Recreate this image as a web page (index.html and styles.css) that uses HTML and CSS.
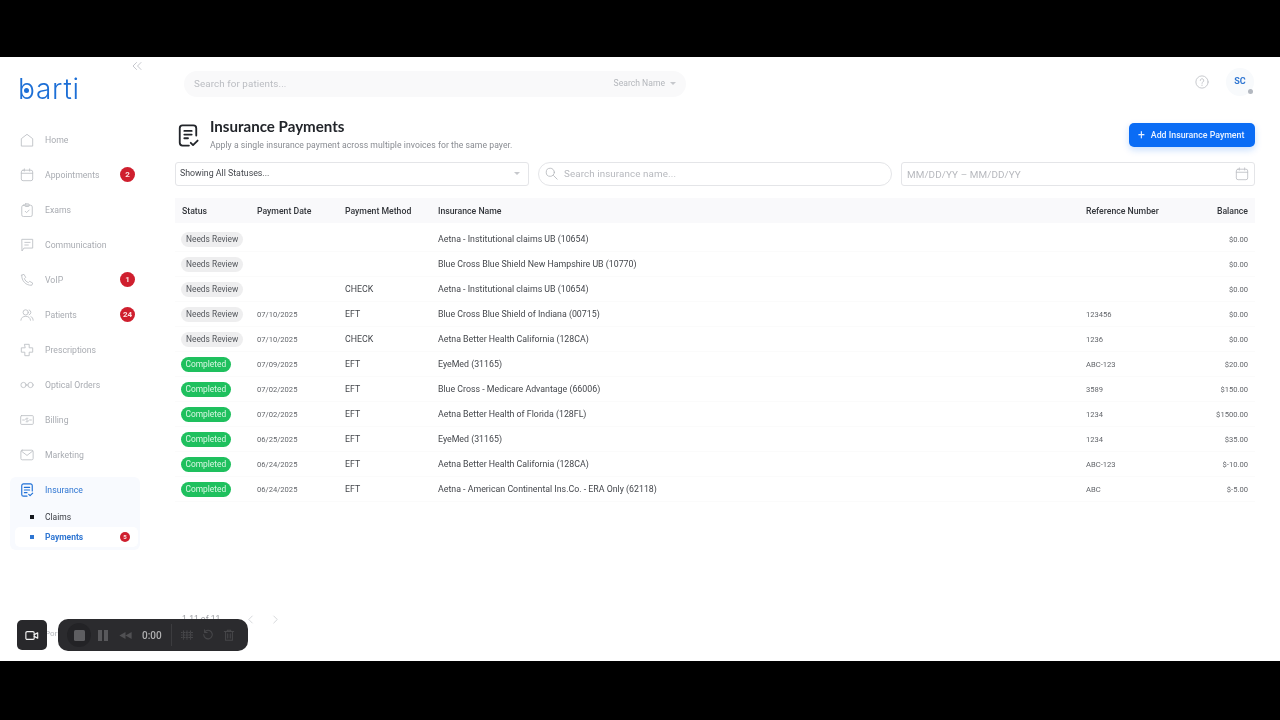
FILE: index.html
```html
<!DOCTYPE html>
<html lang="en">
<head>
<meta charset="utf-8">
<title>Insurance Payments</title>
<link rel="stylesheet" href="styles.css">
</head>
<body>
<div class="screen">
  <aside class="sidebar">
    <div class="collapse"><svg class="collapse-icon" viewBox="0 0 10 8"><path d="M4.500 .5 1 4l3.500 3.500M9 .5 5.500 4 9 7.500"/></svg></div>
    <div class="logo"><span class="logo-text">barti</span><span class="logo-dot"></span></div>
    <nav class="nav">
      <a class="nav-item"><svg class="ico" viewBox="0 0 16 16"><path d="M1.500 14.500V6.500L8 1.500l6.500 5v8z"/></svg><span>Home</span></a>
      <a class="nav-item"><svg class="ico" viewBox="0 0 16 16"><rect x="1.500" y="2.500" width="13" height="12" rx="2"/><path d="M1.500 6h13M5 1v2.500M11 1v2.500"/></svg><span>Appointments</span><b class="badge">2</b></a>
      <a class="nav-item"><svg class="ico" viewBox="0 0 16 16"><rect x="2" y="2.500" width="12" height="13" rx="2"/><rect x="5.500" y="1" width="5" height="3" rx="1"/><path d="m6 9.500 1.500 1.500 3-3"/></svg><span>Exams</span></a>
      <a class="nav-item"><svg class="ico" viewBox="0 0 16 16"><path d="M2.500 1.500h12v10H4.500l-2 3z"/><path d="M5.500 5h6M5.500 8h4"/></svg><span>Communication</span></a>
      <a class="nav-item"><svg class="ico" viewBox="0 0 16 16"><path d="M2 2.500 4.500 1.500l2 3.500-1.500 1.500c.8 2 2.500 3.700 4.500 4.500L11 9.500l3.500 2-1 2.500C7 14.500 1.500 9 2 2.500z"/></svg><span>VoIP</span><b class="badge">1</b></a>
      <a class="nav-item"><svg class="ico" viewBox="0 0 16 16"><circle cx="6.500" cy="5" r="3"/><path d="M1 14c.2-3 2.500-4.500 5.500-4.500S11.800 11 12 14M10.500 2.200a3 3 0 0 1 0 5.600M12.500 9.800c1.500.6 2.400 2 2.500 4.200"/></svg><span>Patients</span><b class="badge">24</b></a>
      <a class="nav-item"><svg class="ico" viewBox="0 0 16 16"><path d="M5.500 1.500h5v4h4v5h-4v4h-5v-4h-4v-5h4z"/></svg><span>Prescriptions</span></a>
      <a class="nav-item"><svg class="ico" viewBox="0 0 16 16"><circle cx="4" cy="8" r="3"/><circle cx="12" cy="8" r="3"/><path d="M7 8h2"/></svg><span>Optical Orders</span></a>
      <a class="nav-item"><svg class="ico" viewBox="0 0 16 16"><rect x=".8" y="3" width="14.400" height="10" rx="1"/><path d="M3 8h2M11 8h2M9 6H7.500a1 1 0 0 0 0 2h1a1 1 0 0 1 0 2H7"/></svg><span>Billing</span></a>
      <a class="nav-item"><svg class="ico" viewBox="0 0 16 16"><rect x="1" y="2.500" width="14" height="11" rx="1.500"/><path d="m1.500 3.500 6.500 5 6.500-5"/></svg><span>Marketing</span></a>
      <div class="nav-group">
        <a class="nav-head"><svg class="ico ico-active" viewBox="0 0 16 16"><path d="M14 9V3a2 2 0 0 0-2-2H4a2 2 0 0 0-2 2v10a2 2 0 0 0 2 2h4"/><path d="M5 5h6M5 8h6M5 11h3M10 13l1.500 1.500 3-3"/></svg><span>Insurance</span></a>
        <a class="sub-item"><i class="bullet"></i><span>Claims</span></a>
        <a class="sub-item sub-active"><i class="bullet"></i><span>Payments</span><b class="badge badge-sm">5</b></a>
      </div>
    </nav>
    <div class="side-foot">Portal</div>
  </aside>

  <main class="main">
    <header class="topbar">
      <div class="patient-search">
        <span class="patient-ph">Search for patients...</span>
        <span class="patient-mode">Search Name<i class="caret"></i></span>
      </div>
      <div class="top-right">
        <svg class="help" viewBox="0 0 16 16"><circle cx="8" cy="8" r="7"/><path d="M6 6.300a2 2 0 1 1 3 1.700c-.7.400-1 .8-1 1.600M8 11.500v.6"/></svg>
        <div class="avatar">SC<i class="status-dot"></i></div>
      </div>
    </header>

    <section class="page-head">
      <svg class="page-icon" viewBox="0 0 24 26"><path d="M21 13V5a3 3 0 0 0-3-3H6a3 3 0 0 0-3 3v16a3 3 0 0 0 3 3h7"/><path d="M8 8h8M8 12h8M8 16h4M15 21l2.500 2.500 5-5"/></svg>
      <div class="page-titles">
        <h1>Insurance Payments</h1>
        <p>Apply a single insurance payment across multiple invoices for the same payer.</p>
      </div>
      <button class="add-btn"><span class="plus">+</span>Add Insurance Payment</button>
    </section>

    <section class="filters">
      <div class="field field-select"><span>Showing All Statuses...</span><i class="caret"></i></div>
      <div class="field field-search"><svg class="search-ico" viewBox="0 0 16 16"><circle cx="6.500" cy="6.500" r="5"/><path d="m10.500 10.500 4.500 4.500"/></svg><span>Search insurance name...</span></div>
      <div class="field field-date"><span>MM/DD/YY – MM/DD/YY</span><svg class="cal-ico" viewBox="0 0 16 16"><rect x="1.500" y="2.500" width="13" height="12" rx="2"/><path d="M1.500 6h13M5 1v2.500M11 1v2.500"/></svg></div>
    </section>

    <table class="grid">
      <colgroup><col class="c1"><col class="c2"><col class="c3"><col class="c4"><col class="c5"><col class="c6"></colgroup>
      <thead>
        <tr><th>Status</th><th>Payment Date</th><th>Payment Method</th><th>Insurance Name</th><th>Reference Number</th><th class="num">Balance</th></tr>
      </thead>
      <tbody>
        <tr><td><span class="pill pill-review">Needs Review</span></td><td class="sm"></td><td></td><td>Aetna - Institutional claims UB (10654)</td><td class="sm"></td><td class="sm num">$0.00</td></tr>
        <tr><td><span class="pill pill-review">Needs Review</span></td><td class="sm"></td><td></td><td>Blue Cross Blue Shield New Hampshire UB (10770)</td><td class="sm"></td><td class="sm num">$0.00</td></tr>
        <tr><td><span class="pill pill-review">Needs Review</span></td><td class="sm"></td><td>CHECK</td><td>Aetna - Institutional claims UB (10654)</td><td class="sm"></td><td class="sm num">$0.00</td></tr>
        <tr><td><span class="pill pill-review">Needs Review</span></td><td class="sm">07/10/2025</td><td>EFT</td><td>Blue Cross Blue Shield of Indiana (00715)</td><td class="sm">123456</td><td class="sm num">$0.00</td></tr>
        <tr><td><span class="pill pill-review">Needs Review</span></td><td class="sm">07/10/2025</td><td>CHECK</td><td>Aetna Better Health California (128CA)</td><td class="sm">1236</td><td class="sm num">$0.00</td></tr>
        <tr><td><span class="pill pill-done">Completed</span></td><td class="sm">07/09/2025</td><td>EFT</td><td>EyeMed (31165)</td><td class="sm">ABC-123</td><td class="sm num">$20.00</td></tr>
        <tr><td><span class="pill pill-done">Completed</span></td><td class="sm">07/02/2025</td><td>EFT</td><td>Blue Cross - Medicare Advantage (66006)</td><td class="sm">3589</td><td class="sm num">$150.00</td></tr>
        <tr><td><span class="pill pill-done">Completed</span></td><td class="sm">07/02/2025</td><td>EFT</td><td>Aetna Better Health of Florida (128FL)</td><td class="sm">1234</td><td class="sm num">$1500.00</td></tr>
        <tr><td><span class="pill pill-done">Completed</span></td><td class="sm">06/25/2025</td><td>EFT</td><td>EyeMed (31165)</td><td class="sm">1234</td><td class="sm num">$35.00</td></tr>
        <tr><td><span class="pill pill-done">Completed</span></td><td class="sm">06/24/2025</td><td>EFT</td><td>Aetna Better Health California (128CA)</td><td class="sm">ABC-123</td><td class="sm num">$-10.00</td></tr>
        <tr><td><span class="pill pill-done">Completed</span></td><td class="sm">06/24/2025</td><td>EFT</td><td>Aetna - American Continental Ins.Co. - ERA Only (62118)</td><td class="sm">ABC</td><td class="sm num">$-5.00</td></tr>
      </tbody>
    </table>

    <footer class="pager">
      <span class="pager-text">1-11 of 11</span>
      <svg class="pager-ico" viewBox="0 0 8 10"><path d="M6 1 2 5l4 4"/></svg>
      <svg class="pager-ico" viewBox="0 0 8 10"><path d="m2 1 4 4-4 4"/></svg>
    </footer>
  </main>

  <div class="rec-cam"><svg viewBox="0 0 16 12"><rect x="1" y="1.500" width="9.500" height="9" rx="1.500"/><path d="m10.500 5 4-2v6l-4-2"/></svg></div>
  <div class="rec-bar">
    <span class="rec-stop"><i></i></span>
    <span class="rec-pause"><i></i><i></i></span>
    <svg class="rec-rew" viewBox="0 0 14 8"><path d="M7 0v8L0 4zM14 0v8L7 4z"/></svg>
    <span class="rec-time">0:00</span>
    <span class="rec-sep"></span>
    <svg class="rec-tool" viewBox="0 0 14 14"><path d="M3 2v10M7 2v10M11 2v10M0 4h14M0 7h14M0 10h14" stroke-dasharray="1.500 1.500"/></svg>
    <svg class="rec-tool" viewBox="0 0 14 14"><path d="M3 3.500a5 5 0 1 1-1 3M3 1v3h3"/></svg>
    <svg class="rec-tool" viewBox="0 0 14 14"><path d="M1.500 3h11M5 3V1.500h4V3M3 3v10h8V3M5.500 5.500v5M8.500 5.500v5"/></svg>
  </div>
</div>
</body>
</html>
```
FILE: styles.css
```css
* { box-sizing: border-box; }
html, body { margin: 0; height: 720px; overflow: hidden; background: #000; }
body { padding-top: 57px; font-family: Roboto, "Liberation Sans", sans-serif; color: #333; }
svg { display: block; fill: none; stroke: currentColor; stroke-linecap: round; stroke-linejoin: round; }

.screen { position: relative; height: 604px; background: #fff; display: grid; grid-template-columns: 170px 1fr; overflow: hidden; filter: blur(.3px); }

/* sidebar */
.sidebar { display: flex; flex-direction: column; height: 604px; }
.collapse { height: 19px; padding: 5px 28px 0 0; display: flex; justify-content: flex-end; }
.collapse-icon { width: 10px; height: 8px; color: #c6c8ce; stroke-width: 1; }
.logo { position: relative; height: 46px; padding-left: 18px; }
.logo-text { font-family: Inter, Lato, sans-serif; font-weight: 300; font-size: 28px; line-height: 26px; color: #1d6fd6; letter-spacing: .8px; display: block; }
.logo-dot { position: absolute; left: 24px; top: 12px; width: 5px; height: 5px; border-radius: 50%; background: #1d6fd6; }
.nav { display: flex; flex-direction: column; }
.nav-item { display: flex; align-items: center; gap: 11px; height: 35px; padding: 0 35px 0 20px; font-size: 8.700px; color: #a9acb2; }
.ico { width: 14px; height: 14px; flex: none; color: #bdc0c5; stroke-width: 1; }
.ico-active { color: #1d6fd6; stroke-width: 1.300; }
.badge { margin-left: auto; width: 15px; height: 15px; border-radius: 50%; background: #cf1f2e; color: #fbe4e4; font-size: 8px; font-weight: 700; line-height: 15px; text-align: center; }
.nav-group { margin: 5px 0 0 10px; width: 130px; height: 73px; background: #f8fafe; border-radius: 6px; }
.nav-head { display: flex; align-items: center; gap: 11px; height: 26px; padding-left: 10px; font-size: 8.700px; color: #2f76d2; }
.sub-item { display: flex; align-items: center; height: 20px; margin-left: 5px; width: 123px; padding: 0 8px 0 15px; font-size: 8.500px; color: #3a3d44; }
.bullet { width: 4px; height: 4px; background: #16181d; margin-right: 11px; flex: none; }
.sub-item:nth-child(2) { margin-top: 4px; }
.sub-active { background: #fff; border-radius: 5px; color: #2f76d2; font-weight: 700; }
.sub-active .bullet { background: #2f76d2; }
.badge-sm { width: 10px; height: 10px; font-size: 6px; line-height: 10px; }
.side-foot { margin-top: auto; padding: 0 0 23px 45px; font-size: 8px; color: #b5b7bc; }

/* main */
.main { display: flex; flex-direction: column; padding: 14px 25px 0 5px; min-width: 0; height: 604px; }
.topbar { display: flex; justify-content: space-between; height: 26px; }
.patient-search { width: 502px; margin-left: 9px; height: 26px; border-radius: 13px; background: #f9f9fa; display: flex; justify-content: space-between; align-items: center; padding: 0 8px 2px 10px; }
.patient-ph { font-size: 9.800px; color: #bbbdc2; letter-spacing: .1px; }
.patient-mode { display: flex; align-items: center; font-size: 8.600px; color: #b4b7bc; gap: 5px; margin-right: 2px; }
.caret { width: 0; height: 0; border: 3px solid transparent; border-top-color: #c6c8cc; border-bottom-width: 0; display: block; }
.top-right { display: flex; align-items: center; gap: 17px; margin-right: 1px; padding-bottom: 4px; }
.help { width: 14px; height: 14px; color: #c0c2c7; stroke-width: 1; }
.avatar { position: relative; width: 28px; height: 28px; border-radius: 50%; background: #f8fafc; color: #2f76d2; font-size: 9px; font-weight: 700; display: flex; align-items: center; justify-content: center; padding-bottom: 2px; }
.status-dot { position: absolute; right: 1px; bottom: 2px; width: 5px; height: 5px; border-radius: 50%; background: #b3b8c0; }

.page-head { display: flex; align-items: flex-start; margin-top: 26px; height: 25px; }
.page-icon { width: 22px; height: 25px; margin: 0 11px 0 2px; color: #22252a; stroke-width: 2; flex: none; }
.page-titles { flex: 1; margin-top: -6px; }
.page-titles h1 { margin: 0; font-family: Lato, sans-serif; font-size: 15.100px; font-weight: 700; line-height: 18px; color: #22252a; }
.page-titles p { margin: 5px 0 0; font-size: 8.650px; line-height: 11px; color: #888b91; letter-spacing: .05px; }
.add-btn { width: 126px; height: 24px; border: 0; border-radius: 5px; background: #0a6cf5; color: #eaf2ff; font: 500 8.800px Roboto, sans-serif; display: flex; align-items: center; padding: 0 0 0 9px; box-shadow: 0 3px 7px rgba(10, 108, 245, .22); }
.plus { font-size: 12px; font-weight: 400; margin-right: 6px; line-height: 12px; }

.filters { display: grid; grid-template-columns: 354px 354px 354px; gap: 9px; margin-top: 14px; height: 24px; }
.field { display: flex; align-items: center; border: 1px solid #e4e5e8; border-radius: 3px; font-size: 8.800px; color: #45484e; padding: 0 4px 2px; }
.field-select { justify-content: space-between; padding-right: 8px; }
.field-search { border-radius: 12px; gap: 6px; padding-left: 6px; font-size: 9.800px; color: #b7b9be; letter-spacing: .1px; }
.search-ico { width: 13px; height: 13px; color: #b3b5ba; stroke-width: 1; }
.field-date { justify-content: space-between; padding: 0 5px; font-size: 9.900px; color: #b7b9be; letter-spacing: .1px; }
.cal-ico { width: 14px; height: 14px; color: #bfc1c6; stroke-width: 1; }

/* table */
.grid { width: 1080px; margin-top: 12px; border-collapse: separate; border-spacing: 0; table-layout: fixed; }
.c1 { width: 75px; } .c2 { width: 88px; } .c3 { width: 93px; } .c4 { width: 648px; } .c5 { width: 100px; } .c6 { width: 76px; }
.grid th { height: 29px; padding: 0 0 0 7px; background: #f9f9fb; background-clip: padding-box; border-bottom: 4px solid #fff; font-size: 8.700px; font-weight: 500; color: #33363b; text-align: left; }
.grid th:nth-child(n+2), .grid td:nth-child(n+2) { padding-left: 7px; }
.grid td { height: 25px; padding: 0 0 0 6px; font-size: 8.800px; color: #44474c; border-bottom: 1px solid #fbfbfb; white-space: nowrap; }
.grid .sm { font-size: 7.600px; color: #63666b; }
.grid .num { text-align: right; padding-right: 7px; padding-left: 0; }
.pill { display: block; width: fit-content; height: 15px; line-height: 15px; border-radius: 8px; padding: 0 5px; font-size: 8.400px; }
.pill-review { background: #eeeeef; color: #55585d; }
.pill-done { background: #1fc05e; color: #d9f6e4; padding: 0 4.500px; }

.pager { margin-top: auto; margin-bottom: 37px; display: flex; align-items: center; padding-left: 7px; height: 10px; }
.pager-text { width: 65px; font-size: 8.500px; color: #9a9ca1; }
.pager-ico { width: 7px; height: 9px; margin-right: 18px; color: #d0d2d6; stroke-width: 1; }

/* recorder overlay */
.rec-cam { position: absolute; left: 17px; top: 563px; width: 30px; height: 30px; border-radius: 5px; background: #28282b; display: flex; align-items: center; justify-content: center; color: #f2f2f2; }
.rec-cam svg { width: 14px; height: 11px; stroke-width: 1.300; }
.rec-bar { position: absolute; left: 58px; top: 562px; width: 190px; height: 32px; border-radius: 10px; background: #2b2b2e; display: flex; align-items: center; padding-left: 9px; color: #5b5b5e; }
.rec-stop { width: 24px; height: 24px; border-radius: 50%; background: #232326; display: flex; align-items: center; justify-content: center; }
.rec-stop i { width: 11px; height: 11px; border-radius: 1.500px; background: #5e5e61; }
.rec-pause { display: flex; gap: 2px; margin-left: 7px; }
.rec-pause i { width: 4px; height: 11px; background: #58585b; }
.rec-rew { width: 13px; height: 7px; margin-left: 11px; fill: #505053; stroke: none; }
.rec-time { margin-left: 10px; font-size: 10px; font-weight: 500; color: #b0b0b1; width: 20px; }
.rec-sep { width: 1px; height: 22px; background: #3c3c3f; margin: 0 9px; }
.rec-tool { width: 12px; height: 12px; margin-right: 9px; color: #47474a; stroke-width: 1.200; }
```
